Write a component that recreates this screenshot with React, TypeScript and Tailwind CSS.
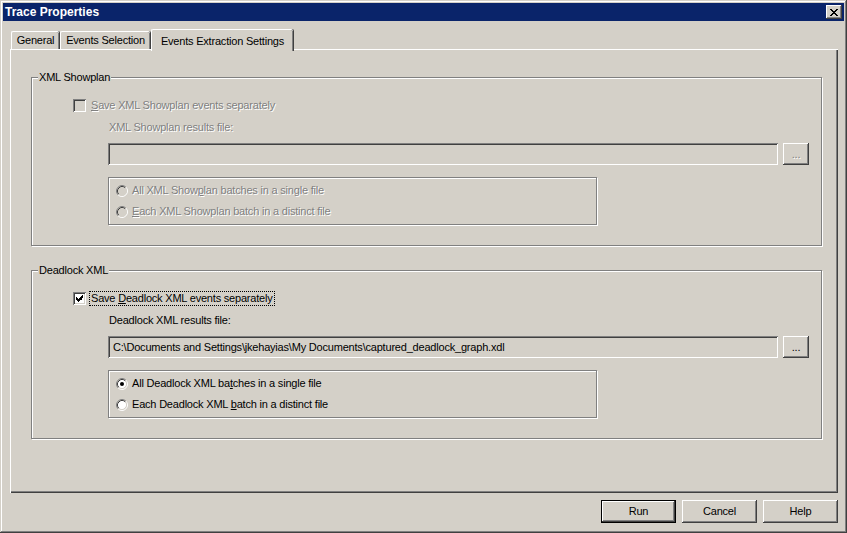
import type { ReactNode } from 'react'

const raised =
  'shadow-[inset_-1px_-1px_#404040,inset_1px_1px_#ffffff,inset_-2px_-2px_#808080,inset_2px_2px_#d4d0c8]'
const sunken =
  'shadow-[inset_1px_1px_#808080,inset_-1px_-1px_#ffffff,inset_2px_2px_#404040,inset_-2px_-2px_#d4d0c8]'
const etched = 'border border-[#808080] shadow-[inset_1px_1px_#ffffff,1px_1px_#ffffff]'
const disabledText = 'text-[#808080] [text-shadow:1px_1px_0_#ffffff]'

function CloseGlyph() {
  return (
    <svg width="8" height="7" viewBox="0 0 8 7" shapeRendering="crispEdges">
      <path
        d="M0 0h2v1H0zM6 0h2v1H6zM1 1h2v1H1zM5 1h2v1H5zM2 2h4v1H2zM3 3h2v1H3zM2 4h4v1H2zM1 5h2v1H1zM5 5h2v1H5zM0 6h2v1H0zM6 6h2v1H6z"
        fill="#000"
      />
    </svg>
  )
}

function CheckBox({ checked, disabled }: { checked?: boolean; disabled?: boolean }) {
  return (
    <span
      className={`flex h-[13px] w-[13px] shrink-0 items-center justify-center ${sunken} ${
        disabled ? 'bg-[#d4d0c8]' : 'bg-white'
      }`}
    >
      {checked && (
        <svg width="7" height="7" viewBox="0 0 7 7" shapeRendering="crispEdges">
          <path d="M6 0h1v3H6zM5 1h1v4H5zM4 2h1v3H4zM0 2h1v3H0zM1 3h1v3H1zM2 4h1v3H2zM3 3h1v3H3z" fill="#000" />
        </svg>
      )}
    </span>
  )
}

function Radio({ selected, disabled }: { selected?: boolean; disabled?: boolean }) {
  return (
    <svg width="12" height="12" viewBox="0 0 12 12" className="shrink-0">
      <circle cx="6" cy="6" r="4.5" fill={disabled ? '#d4d0c8' : '#ffffff'} />
      <path d="M2.11 9.89A5.5 5.5 0 0 1 9.89 2.11" fill="none" stroke="#808080" />
      <path d="M9.89 2.11A5.5 5.5 0 0 1 2.11 9.89" fill="none" stroke="#ffffff" />
      <path d="M2.82 9.18A4.5 4.5 0 0 1 9.18 2.82" fill="none" stroke="#404040" />
      <path d="M9.18 2.82A4.5 4.5 0 0 1 2.82 9.18" fill="none" stroke="#d4d0c8" />
      {selected && <circle cx="6" cy="6" r="2" fill="#000" />}
    </svg>
  )
}

function RadioRow({ children, selected, disabled }: { children: ReactNode; selected?: boolean; disabled?: boolean }) {
  return (
    <div className="flex h-[13px] items-center">
      <Radio selected={selected} disabled={disabled} />
      <span className={`ml-[4px] leading-[13px] ${disabled ? disabledText : ''}`}>{children}</span>
    </div>
  )
}

function GroupBox({
  title,
  disabled,
  focused,
  checkLabel,
  fileLabel,
  filePath,
  radios,
  className = '',
}: {
  title: string
  disabled?: boolean
  focused?: boolean
  checkLabel: ReactNode
  fileLabel: string
  filePath?: string
  radios: ReactNode[]
  className?: string
}) {
  return (
    <div className={`relative h-[169px] w-[791px] ${etched} ${className}`}>
      <span className="absolute left-[6px] top-[-7px] bg-[#d4d0c8] px-[1px] leading-[13px]">{title}</span>
      <div className="flex flex-col pl-[41px] pt-[21px]">
        <div className="flex h-[13px] items-center">
          <CheckBox checked={!disabled} disabled={disabled} />
          <span
            className={`ml-[3px] border px-[1px] leading-[13px] ${
              focused ? 'border-dotted border-black' : 'border-transparent'
            } ${disabled ? disabledText : ''}`}
          >
            {checkLabel}
          </span>
        </div>
        <div className="ml-[35px] flex flex-col">
          <p className={`mt-[9px] pl-[1px] leading-[13px] ${disabled ? disabledText : ''}`}>{fileLabel}</p>
          <div className="mt-[9px] flex gap-[5px]">
            <div className={`flex h-[22px] w-[670px] items-center bg-[#d4d0c8] pl-[5px] ${sunken}`}>
              <span className="leading-[13px]">{filePath}</span>
            </div>
            <button
              className={`flex h-[22px] w-[26px] items-center justify-center bg-[#d4d0c8] pt-[1px] ${raised} ${
                disabled ? disabledText : ''
              }`}
            >
              ...
            </button>
          </div>
          <div className={`mt-[12px] flex h-[48px] w-[489px] flex-col gap-[8px] pl-[7px] pt-[6px] ${etched}`}>
            {radios.map((r, i) => (
              <RadioRow key={i} selected={!disabled && i === 0} disabled={disabled}>
                {r}
              </RadioRow>
            ))}
          </div>
        </div>
      </div>
    </div>
  )
}

function DialogButton({ label, isDefault }: { label: string; isDefault?: boolean }) {
  if (isDefault) {
    return (
      <div className="h-[23px] w-[75px] border border-black">
        <button className={`flex h-full w-full items-center justify-center bg-[#d4d0c8] ${raised}`}>{label}</button>
      </div>
    )
  }
  return (
    <button className={`flex h-[23px] w-[75px] items-center justify-center bg-[#d4d0c8] ${raised}`}>{label}</button>
  )
}

export default function App() {
  const u = (s: string) => <span className="underline underline-offset-[1px]">{s}</span>

  return (
    <div
      className={`flex h-[533px] w-[847px] flex-col bg-[#d4d0c8] p-[3px] font-['Liberation_Sans',Arial,sans-serif] text-[11px] tracking-[-0.2px] text-black shadow-[inset_-1px_-1px_#404040,inset_1px_1px_#d4d0c8,inset_-2px_-2px_#808080,inset_2px_2px_#ffffff]`}
    >
      {/* title bar */}
      <div className="flex h-[18px] items-center justify-between bg-[#0a246a] pl-[2px] pr-[2px]">
        <span className="text-[12px] font-bold leading-[14px] tracking-normal text-white">Trace Properties</span>
        <button className={`flex h-[14px] w-[16px] items-center justify-center bg-[#d4d0c8] ${raised}`}>
          <CloseGlyph />
        </button>
      </div>

      {/* tabs */}
      <div className="ml-[7px] mt-[8px] flex h-[20px] items-end">
        <div className="ml-[1px] flex h-[18px] w-[48px] items-center justify-center rounded-t-[2px] border-l border-t border-white shadow-[inset_-1px_0_#808080,1px_0_#404040]">
          General
        </div>
        <div className="ml-[1px] flex h-[18px] w-[90px] items-center justify-center rounded-t-[2px] border-l border-t border-white shadow-[inset_-1px_0_#808080,1px_0_#404040]">
          Events Selection
        </div>
        <div className="relative z-10 ml-[1px] mb-[-2px] flex h-[22px] w-[142px] items-start justify-center rounded-t-[2px] border-l border-t border-white bg-[#d4d0c8] pt-[3px] shadow-[inset_-1px_0_#808080,1px_0_#404040]">
          Events Extraction Settings
        </div>
      </div>

      {/* panel */}
      <div className="ml-[7px] flex h-[444px] w-[828px] flex-col pl-[21px] pt-[28px] shadow-[inset_1px_1px_#ffffff,inset_-1px_-1px_#404040,inset_-2px_-2px_#808080]">
        <GroupBox
          title="XML Showplan"
          disabled
          checkLabel={<>{u('S')}ave XML Showplan events separately</>}
          fileLabel="XML Showplan results file:"
          radios={[
            <>All XML Show{u('p')}lan batches in a single file</>,
            <>{u('E')}ach XML Showplan batch in a distinct file</>,
          ]}
        />
        <GroupBox
          className="mt-[24px]"
          title="Deadlock XML"
          focused
          checkLabel={<>Save {u('D')}eadlock XML events separately</>}
          fileLabel="Deadlock XML results file:"
          filePath="C:\Documents and Settings\jkehayias\My Documents\captured_deadlock_graph.xdl"
          radios={[
            <>All Deadlock XML ba{u('t')}ches in a single file</>,
            <>Each Deadlock XML {u('b')}atch in a distinct file</>,
          ]}
        />
      </div>

      {/* buttons */}
      <div className="mr-[6px] mt-[7px] flex justify-end gap-[6px]">
        <DialogButton label="Run" isDefault />
        <DialogButton label="Cancel" />
        <DialogButton label="Help" />
      </div>
    </div>
  )
}
